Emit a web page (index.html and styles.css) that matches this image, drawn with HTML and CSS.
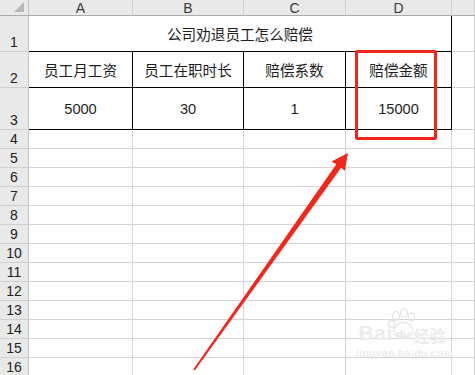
FILE: index.html
```html
<!DOCTYPE html>
<html lang="zh">
<head>
<meta charset="utf-8">
<title>公司劝退员工怎么赔偿</title>
<link rel="stylesheet" href="styles.css">
</head>
<body>
<div class="page">
  <div class="sheet">
    <div class="hd corner"><span class="tri"></span></div>
    <div class="hd col">A</div>
    <div class="hd col">B</div>
    <div class="hd col">C</div>
    <div class="hd col">D</div>
    <div class="hd col"></div>

    <div class="hd rn">1</div>
    <div class="c title">公司劝退员工怎么赔偿</div>
    <div class="c"></div>

    <div class="hd rn">2</div>
    <div class="c box">员工月工资</div>
    <div class="c box">员工在职时长</div>
    <div class="c box">赔偿系数</div>
    <div class="c box">赔偿金额</div>
    <div class="c"></div>

    <div class="hd rn">3</div>
    <div class="c box">5000</div>
    <div class="c box">30</div>
    <div class="c box">1</div>
    <div class="c box">15000</div>
    <div class="c"></div>

    <div class="hd rn">4</div><div class="c"></div><div class="c"></div><div class="c"></div><div class="c"></div><div class="c"></div>
    <div class="hd rn">5</div><div class="c"></div><div class="c"></div><div class="c"></div><div class="c"></div><div class="c"></div>
    <div class="hd rn">6</div><div class="c"></div><div class="c"></div><div class="c"></div><div class="c"></div><div class="c"></div>
    <div class="hd rn">7</div><div class="c"></div><div class="c"></div><div class="c"></div><div class="c"></div><div class="c"></div>
    <div class="hd rn">8</div><div class="c"></div><div class="c"></div><div class="c"></div><div class="c"></div><div class="c"></div>
    <div class="hd rn">9</div><div class="c"></div><div class="c"></div><div class="c"></div><div class="c"></div><div class="c"></div>
    <div class="hd rn">10</div><div class="c"></div><div class="c"></div><div class="c"></div><div class="c"></div><div class="c"></div>
    <div class="hd rn">11</div><div class="c"></div><div class="c"></div><div class="c"></div><div class="c"></div><div class="c"></div>
    <div class="hd rn">12</div><div class="c"></div><div class="c"></div><div class="c"></div><div class="c"></div><div class="c"></div>
    <div class="hd rn">13</div><div class="c"></div><div class="c"></div><div class="c"></div><div class="c"></div><div class="c"></div>
    <div class="hd rn">14</div><div class="c"></div><div class="c"></div><div class="c"></div><div class="c"></div><div class="c"></div>
    <div class="hd rn">15</div><div class="c"></div><div class="c"></div><div class="c"></div><div class="c"></div><div class="c"></div>
    <div class="hd rn">16</div><div class="c"></div><div class="c"></div><div class="c"></div><div class="c"></div><div class="c"></div>
  </div>

  <div class="redbox"></div>

  <svg class="arrow" width="475" height="375" viewBox="0 0 475 375">
    <polygon points="193.2,369.6 336.3,164.3 331.5,161.5 348,153 344.8,170.8 341.1,167.7 194.8,370.6" fill="#f3261b"/>
  </svg>

  <div class="watermark">
    <svg class="paw" width="34" height="30" viewBox="0 0 34 30">
      <g fill="none" stroke="#e6e6e6" stroke-width="1.3">
        <ellipse cx="10" cy="8" rx="3.4" ry="4.4"/>
        <ellipse cx="18" cy="5" rx="3.4" ry="4.4"/>
        <ellipse cx="25.5" cy="9" rx="3.2" ry="4"/>
        <ellipse cx="5.5" cy="16" rx="3" ry="3.6"/>
        <path d="M8 26 C6 19 13 14 18 14.5 C24 15 28 20 26 26 C23 29 11 29 8 26 Z"/>
      </g>
    </svg>
    <div class="wm-line"><span class="wm-bai">Bai</span><span class="wm-du">du</span><span class="wm-jy">经验</span></div>
    <div class="wm-url">jingyan.baidu.com</div>
  </div>
</div>
</body>
</html>
```

FILE: styles.css
```css
* { box-sizing: border-box; }
html, body { margin: 0; padding: 0; background: #ffffff; }
body {
  width: 475px;
  height: 375px;
  overflow: hidden;
  font-family: "Liberation Sans", "Noto Sans CJK SC", sans-serif;
}
.page {
  position: relative;
  width: 475px;
  height: 375px;
  overflow: hidden;
}
.sheet {
  display: grid;
  grid-template-columns: 29px 104px 111px 102px 106px 1fr;
  grid-template-rows: 16px 36px 36px 42px repeat(13, 19px);
  width: 475px;
}
.c {
  border-right: 1px solid #d4d4d4;
  border-bottom: 1px solid #d4d4d4;
  display: flex;
  align-items: center;
  justify-content: center;
  font-size: 14.6px;
  color: #1e1e1e;
  white-space: nowrap;
}
.hd {
  background: #e9e9e9;
  border-right: 1px solid #c3c3c3;
  border-bottom: 1px solid #d0d0d0;
  color: #3a3a3a;
  font-size: 14px;
  display: flex;
  justify-content: center;
  white-space: nowrap;
}
.col {
  align-items: center;
  border-bottom: 1px solid #ababab;
  border-right: 1px solid #d0d0d0;
  line-height: 1;
  padding-top: 1px;
}
.corner {
  position: relative;
  border-bottom: 1px solid #ababab;
  border-right: 1px solid #c3c3c3;
}
.tri {
  position: absolute;
  right: 4px;
  bottom: 3px;
  width: 0;
  height: 0;
  border-left: 10px solid transparent;
  border-bottom: 10px solid #b8b8b8;
}
.rn {
  align-items: flex-end;
  line-height: 1;
  padding-bottom: 2px;
  font-size: 14px;
  color: #222;
}
.title {
  grid-column: span 4;
  border-right: 1px solid #000;
  border-bottom: 1px solid #000;
}
.box {
  border-right: 1px solid #000;
  border-bottom: 1px solid #000;
}
.redbox {
  position: absolute;
  left: 355px;
  top: 50px;
  width: 82px;
  height: 90px;
  border: 3px solid #f3261b;
  border-radius: 2px;
}
.arrow {
  position: absolute;
  left: 0;
  top: 0;
}
.watermark {
  position: absolute;
  left: 356px;
  top: 322px;
  width: 92px;
  text-align: center;
}
.paw {
  position: absolute;
  left: 30px;
  top: -14px;
}
.wm-line {
  position: relative;
  display: flex;
  align-items: flex-end;
  justify-content: center;
  gap: 3px;
  font-weight: bold;
}
.wm-bai { font-size: 21px; line-height: 1; color: #ececec; letter-spacing: 0.5px; }
.wm-du { font-size: 12px; line-height: 1; color: #e8e8e8; margin-bottom: 2px; }
.wm-jy { font-size: 16px; line-height: 1; color: #ececec; font-family: "Noto Sans CJK SC", sans-serif; }
.wm-url {
  font-size: 10.5px;
  font-weight: bold;
  color: #ededed;
  margin-top: 4px;
  letter-spacing: 0.3px;
}
```
